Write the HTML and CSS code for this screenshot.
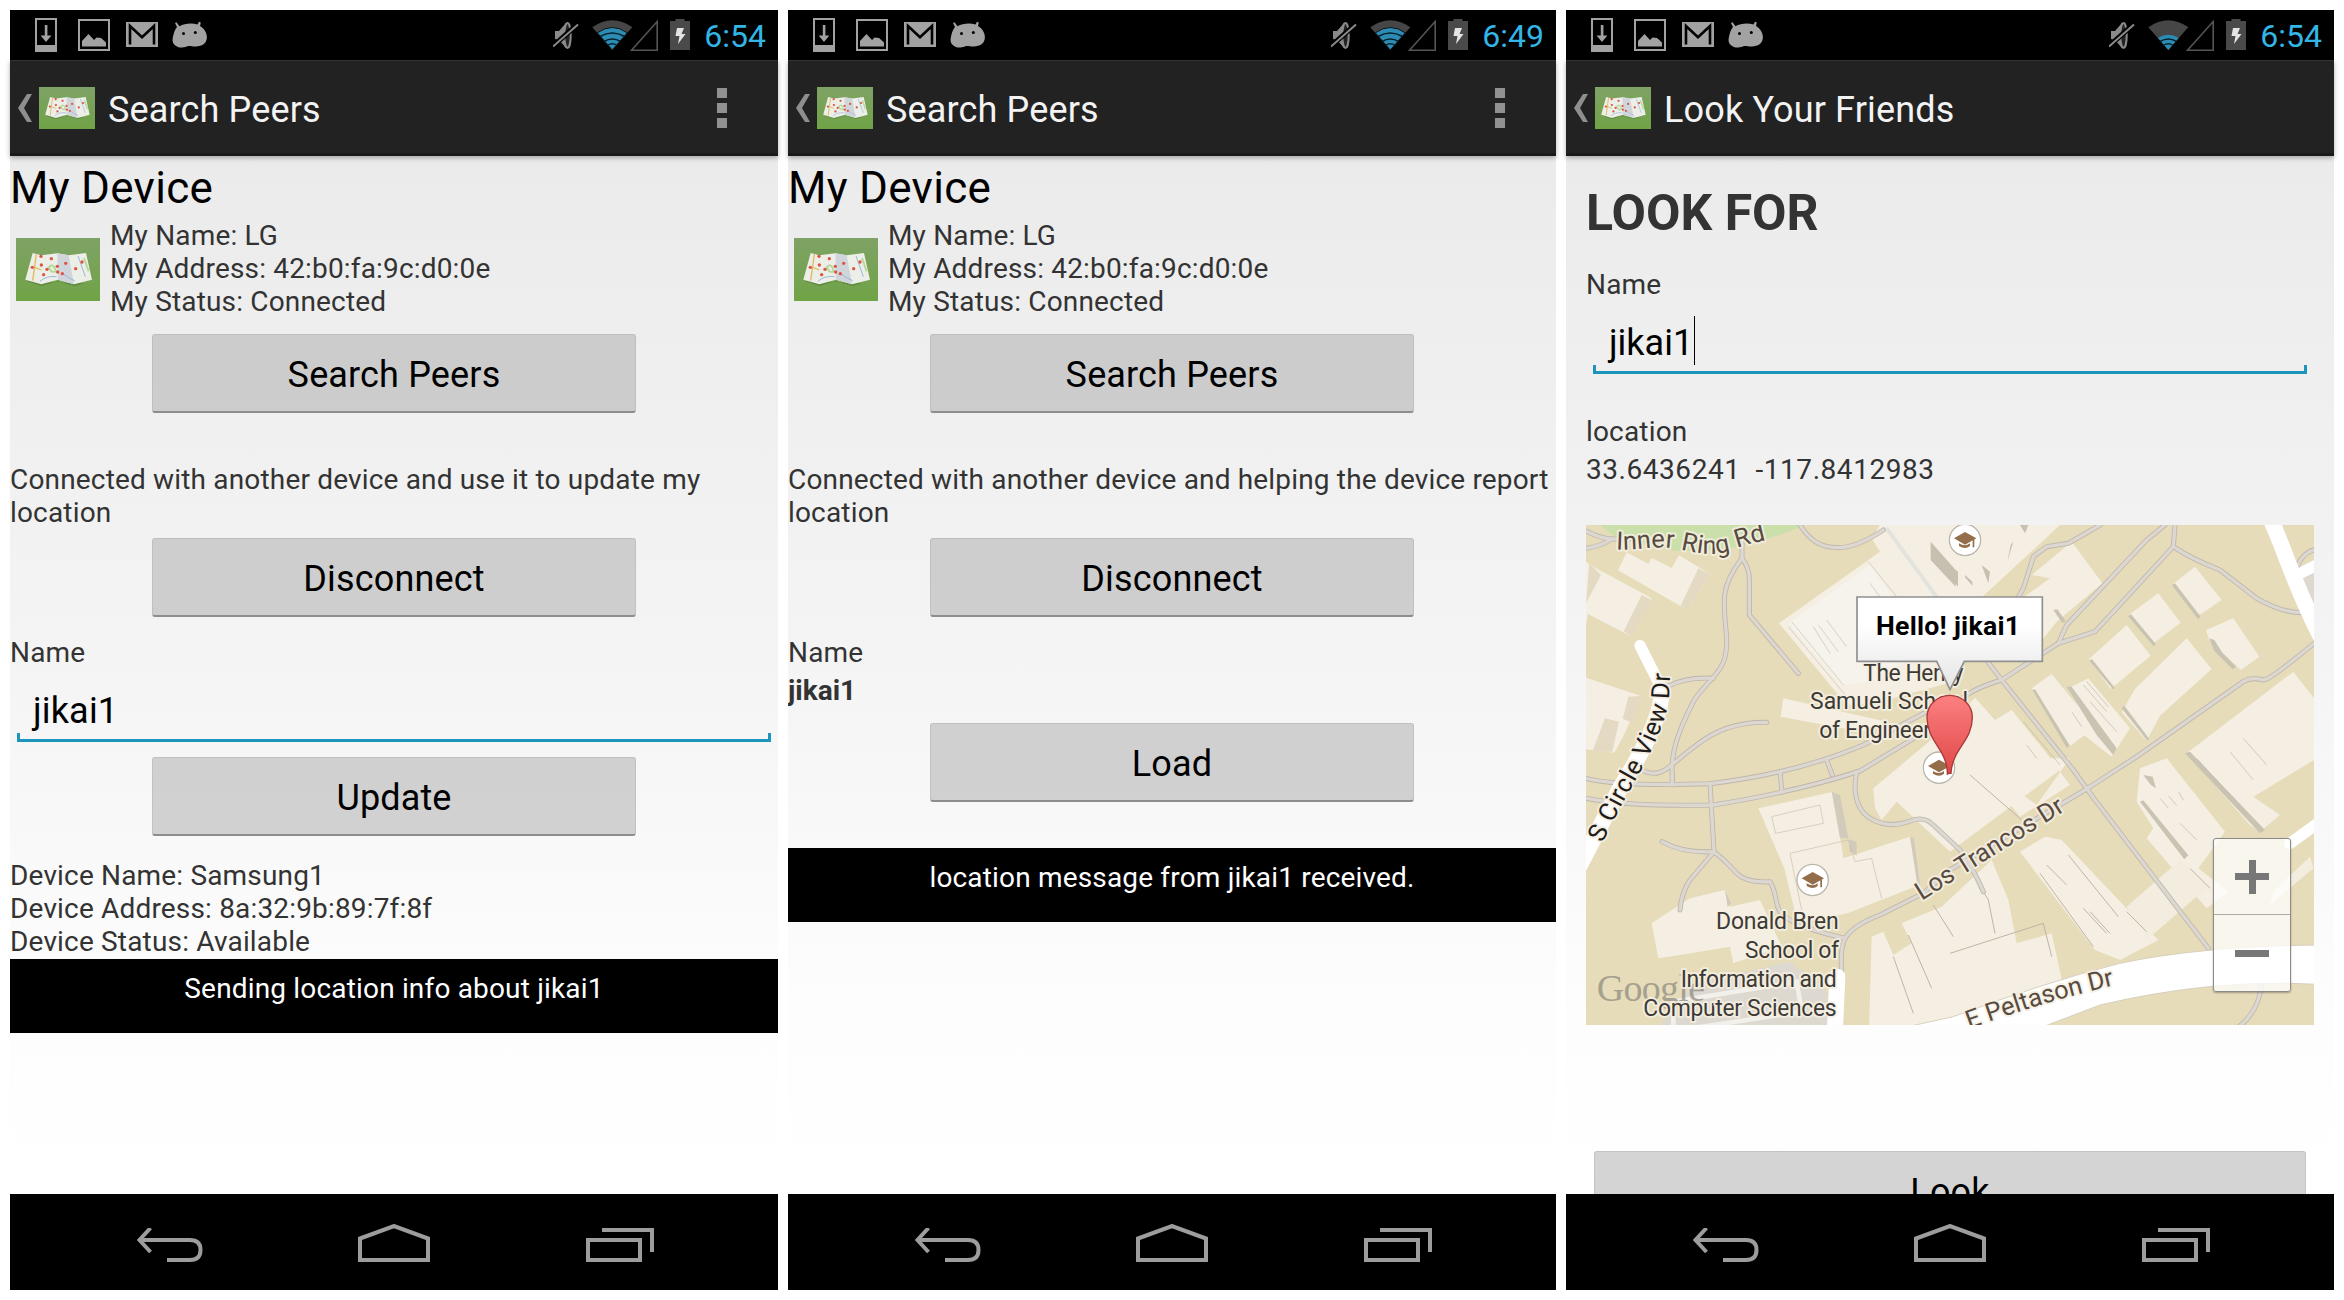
FILE: index.html
```html
<!DOCTYPE html>
<html lang="en">
<head>
<meta charset="utf-8">
<title>Search Peers</title>
<link rel="stylesheet" href="styles.css">
</head>
<body>
<svg class="sprite" aria-hidden="true">
  <defs>
    <linearGradient id="grass" x1="0" y1="0" x2="0" y2="1"><stop offset="0" stop-color="#7fa266"/><stop offset="1" stop-color="#70a346"/></linearGradient>
    <linearGradient id="pinfill" x1="0" y1="0" x2="0" y2="1"><stop offset="0" stop-color="#fc8080"/><stop offset="1" stop-color="#e04848"/></linearGradient>
    <linearGradient id="bubble" x1="0" y1="0" x2="0" y2="1"><stop offset="0.3" stop-color="#fff"/><stop offset="1" stop-color="#e4e4e4"/></linearGradient>
  </defs>
  <symbol id="i-download" viewBox="35 10 22 50"><path fill="#a2a2a2" fill-rule="evenodd" d="M35 18h22v34H35zM37 20v25h18V20z"/><path fill="#a2a2a2" d="M44.800 25h2.600v10.500h4L46 42l-5.400-6.500h4.200z"/></symbol>
  <symbol id="i-picture" viewBox="78 10 32 50"><path fill="none" stroke="#a2a2a2" stroke-width="2" d="M79 20h30v30H79z"/><path fill="#a2a2a2" d="M82 46.500V41l6.500-7 5.500 6 2.500-2.500 4.500.5 5 4.500v4z"/></symbol>
  <symbol id="i-mail" viewBox="126 10 32 50"><path fill="#a2a2a2" d="M126 22h32v25h-32z"/><path fill="none" stroke="#000" stroke-width="2.600" d="M130 44.500V26l12 11.200L154 26v18.500"/></symbol>
  <symbol id="i-droid" viewBox="172 10 36 50"><path fill="#a2a2a2" d="M177 27l-2-4 1.500-.8 3 4c5-2.800 12-3.500 18-1.700l1.500-2.800 1.800.8-.8 3.600c4 2.400 7 6.500 6.900 11.500-.2 6-5 8.800-11 9-4 .2-6-1-9-.2-4 1.200-6 1.600-9 .6-6-2.200-6-7-4.500-12 .6-3 1.800-5.600 3.600-8z"/><circle cx="183.500" cy="33.500" r="1.500"/><circle cx="195.300" cy="32.500" r="1.500"/></symbol>
  <symbol id="i-mute" viewBox="553 10 26 50"><path fill="#8a8a8a" d="M555 31h4l7-8v25l-7-8-4-1z"/><ellipse cx="567.500" cy="35.500" rx="3.200" ry="12.500" fill="#222" stroke="#8a8a8a" stroke-width="2"/><path stroke="#000" stroke-width="5" d="M553 46l25-22"/><path stroke="#8a8a8a" stroke-width="2" d="M553 46.500l25-22"/></symbol>
  <symbol id="i-wifi" viewBox="592 10 40 50"><path fill="#464646" d="M612.300 50l-20-22.800q20-14 40 0z"/><path stroke="#111" fill="#2c8cb4" stroke-width="1" d="M612.300 50l-15-17.200q15-10.600 30 0z"/><path fill="none" stroke="#04202c" stroke-width="1.500" d="M600 36.500q12.300-7 24.600 0M604 41.500q8.300-5 16.600 0M607.500 45.300q4.800-3 9.600 0"/></symbol>
  <symbol id="i-wifi-low" viewBox="592 10 40 50"><path fill="#464646" d="M612.300 50l-20-22.800q20-14 40 0z"/><path fill="#2c8cb4" d="M612.300 50l-10.300-12q10.300-6.500 20.600 0z"/><path fill="none" stroke="#04202c" stroke-width="1.500" d="M604 41.500q8.300-5 16.600 0M607.500 45.300q4.800-3 9.600 0"/></symbol>
  <symbol id="i-signal" viewBox="630 10 28 50"><path fill="none" stroke="#555" stroke-width="1.600" d="M631.500 50.200h25.700V21.500z"/></symbol>
  <symbol id="i-battery" viewBox="670 10 20 50"><path fill="#4a4a4a" d="M670 21h5.500v-2h9v2h5.500v29h-20z"/><path fill="#e4e4e4" d="M677 28h7l-2.500 6h4L678 44l1.500-8h-4z"/></symbol>
  <symbol id="i-app" viewBox="0 0 252 189">
    <path fill="url(#grass)" d="M0 0h252v189H0z"/>
    <path fill="#4c6f35" opacity=".5" d="M30 128l46 16 48-14 52 14 54-16-26 8z"/>
    <path fill="#eceee8" d="M50 45l26 7 48-6 34 6 52-7 18 80-54 14-48-14-50 14-48-14z"/>
    <path fill="#cfd5db" d="M124 46l34 6 16 87-48-14z"/>
    <path fill="none" stroke="#e0b95e" stroke-width="4" d="M61 49L50 128M56 88l20 8"/>
    <path fill="none" stroke="#9db7d8" stroke-width="3" d="M72 130q20-18 50-14M142 108q18 14 34 20M186 54l22 62"/>
    <path fill="none" stroke="#b5d99a" stroke-width="6" d="M98 88q10-14 18 2t-10 10zM204 60l14 40"/>
    <g fill="#dc5442"><circle cx="75" cy="55" r="5"/><circle cx="106" cy="62" r="5"/><circle cx="76" cy="81" r="5"/><circle cx="49" cy="88" r="5"/><circle cx="93" cy="94" r="5"/><circle cx="83" cy="110" r="5"/><circle cx="124" cy="85" r="5"/><circle cx="125" cy="102" r="5"/><circle cx="149" cy="76" r="5"/><circle cx="139" cy="107" r="5"/><circle cx="198" cy="72" r="5"/><circle cx="179" cy="92" r="5"/></g>
  </symbol>
  <symbol id="i-up" viewBox="0 0 14 28"><path fill="#8e8e8e" d="M9 0h5L6 14l8 14H9L0 14z"/></symbol>
  <symbol id="i-back" viewBox="0 0 68 34"><path fill="none" stroke="#9d9d9d" stroke-width="4" d="M13.500 0L2.500 12l11 12M3 12H53q10.500 0 10.500 10T53 32H30"/></symbol>
  <symbol id="i-home" viewBox="0 0 72 38"><path fill="none" stroke="#9d9d9d" stroke-width="4" d="M2 36V14.500L36 2l34 12.500V36z"/></symbol>
  <symbol id="i-recent" viewBox="0 0 68 34"><path fill="none" stroke="#9d9d9d" stroke-width="4" d="M2 12h52v20H2zM16 2h50v22"/></symbol>
  <symbol id="i-school" viewBox="-50 -50 100 100"><circle r="47" fill="#fff" stroke="#bbb5ab" stroke-width="4"/><path fill="#946d4a" d="M-33-5L0-24 34-5 0 14zM-18 10q18 12 33 0v8q-14 12-33 0zM23-2h5v24h-5z"/></symbol>
</svg>

<main class="board">
  <section class="phone">
    <div class="statusbar">
      <svg class="s-download"><use href="#i-download"/></svg><svg class="s-picture"><use href="#i-picture"/></svg><svg class="s-mail"><use href="#i-mail"/></svg><svg class="s-droid"><use href="#i-droid"/></svg>
      <div class="system"><svg class="s-mute"><use href="#i-mute"/></svg><svg class="s-wifi"><use href="#i-wifi"/></svg><svg class="s-signal"><use href="#i-signal"/></svg><svg class="s-battery"><use href="#i-battery"/></svg><span class="clock">6:54</span></div>
    </div>
    <header class="actionbar"><svg class="up"><use href="#i-up"/></svg><svg class="appicon"><use href="#i-app"/></svg><h1>Search Peers</h1><div class="overflow"><i></i><i></i><i></i></div></header>
    <div class="content">
      <h2>My Device</h2>
      <div class="device"><svg><use href="#i-app"/></svg><div><p>My Name: LG</p><p>My Address: 42:b0:fa:9c:d0:0e</p><p>My Status: Connected</p></div></div>
      <button class="btn">Search Peers</button>
      <p class="message">Connected with another device and use it to update my location</p>
      <button class="btn second">Disconnect</button>
      <p class="label">Name</p>
      <div class="field"><span>jikai1</span></div>
      <button class="btn update">Update</button>
      <div class="peer"><p>Device Name: Samsung1</p><p>Device Address: 8a:32:9b:89:7f:8f</p><p>Device Status: Available</p></div>
      <div class="toast">Sending location info about jikai1</div>
    </div>
    <nav class="navbar"><svg class="n-back"><use href="#i-back"/></svg><svg class="n-home"><use href="#i-home"/></svg><svg class="n-recent"><use href="#i-recent"/></svg></nav>
  </section>

  <section class="phone">
    <div class="statusbar">
      <svg class="s-download"><use href="#i-download"/></svg><svg class="s-picture"><use href="#i-picture"/></svg><svg class="s-mail"><use href="#i-mail"/></svg><svg class="s-droid"><use href="#i-droid"/></svg>
      <div class="system"><svg class="s-mute"><use href="#i-mute"/></svg><svg class="s-wifi"><use href="#i-wifi"/></svg><svg class="s-signal"><use href="#i-signal"/></svg><svg class="s-battery"><use href="#i-battery"/></svg><span class="clock">6:49</span></div>
    </div>
    <header class="actionbar"><svg class="up"><use href="#i-up"/></svg><svg class="appicon"><use href="#i-app"/></svg><h1>Search Peers</h1><div class="overflow"><i></i><i></i><i></i></div></header>
    <div class="content">
      <h2>My Device</h2>
      <div class="device"><svg><use href="#i-app"/></svg><div><p>My Name: LG</p><p>My Address: 42:b0:fa:9c:d0:0e</p><p>My Status: Connected</p></div></div>
      <button class="btn">Search Peers</button>
      <p class="message">Connected with another device and helping the device report location</p>
      <button class="btn second">Disconnect</button>
      <p class="label">Name</p>
      <p class="value">jikai1</p>
      <button class="btn load">Load</button>
      <div class="toast late">location message from jikai1 received.</div>
    </div>
    <nav class="navbar"><svg class="n-back"><use href="#i-back"/></svg><svg class="n-home"><use href="#i-home"/></svg><svg class="n-recent"><use href="#i-recent"/></svg></nav>
  </section>

  <section class="phone">
    <div class="statusbar">
      <svg class="s-download"><use href="#i-download"/></svg><svg class="s-picture"><use href="#i-picture"/></svg><svg class="s-mail"><use href="#i-mail"/></svg><svg class="s-droid"><use href="#i-droid"/></svg>
      <div class="system"><svg class="s-mute"><use href="#i-mute"/></svg><svg class="s-wifi"><use href="#i-wifi-low"/></svg><svg class="s-signal"><use href="#i-signal"/></svg><svg class="s-battery"><use href="#i-battery"/></svg><span class="clock">6:54</span></div>
    </div>
    <header class="actionbar"><svg class="up"><use href="#i-up"/></svg><svg class="appicon"><use href="#i-app"/></svg><h1>Look Your Friends</h1></header>
    <div class="content look">
      <h2 class="lookfor">LOOK FOR</h2>
      <p class="label">Name</p>
      <div class="field"><span class="typing">jikai1</span></div>
      <p class="loc">location</p>
      <p class="coords">33.6436241&nbsp; -117.8412983</p>
      <div class="map">
        <svg class="mapart" viewBox="18 30 2184 1500">
          <defs>
            <g id="paths">
              <path d="M18 48Q60 70 95 72H150M18 100Q60 95 95 72"/>
              <path d="M486 75V130Q440 190 434 240C428 320 450 370 434 430C420 480 360 520 340 560C310 620 270 700 277 780V810"/>
              <path d="M486 130Q510 160 508 200V300L655 475"/>
              <path d="M400 490Q320 485 260 515"/>
              <path d="M560 622C470 620 400 650 350 690C280 740 260 775 220 775Q190 775 150 740"/>
              <path d="M18 790Q120 815 390 806Q650 775 850 690L1040 590"/>
              <path d="M18 850Q150 875 400 870Q650 830 840 768L1010 665"/>
              <path d="M390 806L402 1010M600 770L606 832M740 735L757 780M277 780V808"/>
              <path d="M830 770C815 840 835 895 880 915Q930 940 985 920Q1030 900 1060 930L1140 1005Q1180 1060 1210 1130"/>
              <path d="M246 980Q310 1015 400 1010Q430 1030 470 1075Q500 1105 570 1100C595 1140 580 1180 615 1205Q660 1240 795 1270"/>
              <path d="M402 1010L330 1095Q305 1130 300 1185"/>
              <path d="M785 1370Q780 1300 795 1270Q820 1230 900 1200L1030 1135L1110 1065L1515 825L1670 725L1990 500Q2015 485 2050 495Q2070 495 2202 385"/>
              <path d="M660 30Q700 95 760 97Q820 105 910 45"/>
              <path d="M1560 30Q1500 65 1465 85L1400 95L1360 125Q1340 190 1330 220L1290 290"/>
              <path d="M1755 30L1700 75L1460 330L1435 385L1265 495Q1180 520 1140 555L1100 610"/>
              <path d="M1785 30L1780 95L1545 350L1435 385"/>
              <path d="M1780 95Q1830 130 1920 165L2030 250Q2110 295 2170 293"/>
              <path d="M1215 430L1265 495L1480 765L1545 855L1885 1300"/>
              <path d="M2150 160Q2165 115 2202 105"/>
              <path d="M2045 1400Q2040 1490 1970 1540"/>
            </g>
          </defs>
          <rect x="18" y="30" width="2184" height="1500" fill="#e6dcba"/>
          <path fill="#cbdfaa" d="M60 30h615Q600 65 480 92Q400 112 290 108Q180 90 105 65z"/>
          <path fill="#f5efe3" d="M900 30h540L1040 400 1120 500 900 560 800 570 597 325 900 110 875 70zM140 112l65 35 10-18 60 30 22-38 92 55-65 110-210-120zM18 140l55 35-50 120-5 40zM68 170l147 80-65 112-132-68zM18 488l165 55-50 115-30 55-85-10z"/>
          <path fill="#e4dac4" d="M28 145l35 35-45 85zM355 160l34 16-65 110-22-14zM185 240l30 15-62 108-22-14zM145 545l38-2-25 80-30-12zM75 610l42 10-20 90-60 0z"/>
          <path fill="#f5f3eb" d="M625 325L870 150 960 275 1010 420 870 500 785 510z"/>
          <path fill="none" stroke="#e3e3de" stroke-width="12" d="M920 40L1080 260"/>
          <path fill="#f5efe3" d="M610 550l310 70-75 30-243-45zM880 820L1095 640 1185 548 1245 615 1295 585 1440 765 1110 1010 950 860 905 915 885 880zM535 880l225-50 30 200 200-65 28 145-215 85-150 30-40-165zM330 1150l105-25 15 50 90-20 65 140-145 50-10-50-150 25-65 10-20-105z"/>
          <path fill="#d2cbbb" d="M755 830l25 10 25 130-25 0zM808 972l22 10 0 40-22-15zM990 965l12 5 18 140-8 0zM435 1125l18 40-10 12z"/>
          <path fill="none" stroke="#c5bfaf" stroke-width="2" d="M630 1015l175-40 20 65 50-10 30 120M630 1015l35 170M575 905l12 50 143-30-10-55zM865 140l85 105M635 320l155 190M700 335l50 80M715 330l60 80M740 315l60 80M870 205l40 55M625 335l175 210"/>
          <path fill="#f5efe3" d="M1475 80L1567 205 1430 320 1350 420 1270 290 1410 190 1355 180zM1845 155l80 100-75 50-75-95zM1735 235l67 88-85 65-75-85zM1640 330l72 92-120 100-65-90zM1820 370l75 92-155 140-40 75-75-85 40-70zM1960 310l78 115-55 40-95-90-10-30zM1355 520l60-43 130 160-80 60zM1465 520l60-30 125 150-55 85-90-70 20-25zM1820 715L2140 470 2202 550 2202 735 2020 845 2100 900 2040 950 2010 930zM1680 760l80-30 175 220-80 110 90 70-65 50-180-210 20-30-50-80zM1110 815l90-60 120 150 150-95-60-80 60 0-100 140-70-50z"/>
          <path fill="#c9c3b2" d="M1775 210l10-5 77 100-8 7zM1643 303l10-5 75 90-7 6zM1528 437l8-5 68 86-5 5zM1625 580l8-8 75 100-6 5zM1888 370l15 5 25 40 40 40-10 8-55-55zM1357 525l8-2 105 170-10 5zM1460 515l15 0 135 185-10 20-50-60zM1815 715l15-5 225 235-15 10zM1680 860l10-4 135 165-12 12zM1690 780l28 5 10 35-15-10zM1420 285l12-2 25 35-10 6z"/>
          <path fill="none" stroke="#bfb8a8" stroke-width="2" d="M1510 510l70 80M1520 500l65 75M1530 560l80 90M1475 590l30 45M1990 670l70 80M1950 710l70 85M1850 730l100 110M1340 690l30 40M1330 620l110 130M1340 590l95 120M1800 925l50 50M1740 850l25 30M1765 842l25 30M1795 830l15 25"/>
          <path fill="#f5efe3" d="M1320 1010l75-45 50 10 190 200 100 100-115 60-75-30zM875 1265l35-15 30 70 55-35-30-60 120-50 150-140 50 120 25 130 105-30 35 160-80 55-420 130-85 10z"/>
          <path fill="#f3eddf" d="M1640 1175L1800 1035 1890 1110 1700 1275zM2080 1130l110-105 10 35-130 110z"/>
          <path fill="none" stroke="#bdb6a6" stroke-width="3" d="M1380 1075L1540 1295M1465 1020L1615 1205M1510 1180l70 75M1530 1190l60 65M1110 1315l280-90 25 100M1400 1050l60 60M1180 1080l45 75 20 100M1170 780l155 135M1640 1190l60 60M1830 1060l60 60M940 1325l60 170M985 1260l70 160M1060 1170l60 95"/>
          <path fill="#ddd8d0" d="M330 1410l300-70 110 90 10 100H240zM2202 155l-50 50 50 100z"/>
          <path fill="none" stroke="#f2f0ea" stroke-width="14" d="M280 1530v-70l370-60 15 90-330 50"/>
          <use href="#paths" class="casing"/>
          <use href="#paths" class="lane"/>
          <path d="M180 392L250 530" class="road narrow"/>
          <path d="M245 530Q245 620 120 820L0 1050" class="road"/>
          <path d="M2075 20C2120 120 2150 230 2230 380" class="road"/>
          <path d="M2150 180l60-30M2130 985l90-65" class="road narrow"/>
          <path d="M772 1385L765 1540" class="road"/>
          <path fill="#fff" stroke="#d8d0bd" stroke-width="3" d="M960 1540L1120 1505Q1400 1400 1620 1345Q1850 1295 2210 1290V1408Q1900 1390 1560 1470L1390 1535z"/>
          <g class="maplabel">
            <text class="halo street"><textPath href="#ring" textLength="458">Inner Ring Rd</textPath></text>
            <text class="halo street dark"><textPath href="#circle" textLength="555">S Circle View Dr</textPath></text>
            <text class="halo street"><textPath href="#trancos" textLength="510">Los Trancos Dr</textPath></text>
            <text class="halo street"><textPath href="#peltason" textLength="455">E Peltason Dr</textPath></text>
            <text class="halo" x="850" y="497" textLength="300">The Henry</text>
            <text class="halo" x="690" y="582" textLength="474">Samueli School</text>
            <text class="halo" x="718" y="668" textLength="425">of Engineering</text>
            <text class="google" x="50" y="1458" textLength="325">Google</text>
            <text class="halo" x="408" y="1243" textLength="368">Donald Bren</text>
            <text class="halo" x="495" y="1329" textLength="282">School of</text>
            <text class="halo" x="302" y="1415" textLength="468">Information and</text>
            <text class="halo" x="190" y="1502" textLength="580">Computer Sciences</text>
          </g>
          <defs>
            <path id="ring" d="M108 103C180 108 230 88 300 103C360 116 400 124 455 106C490 90 530 82 600 65"/>
            <path id="circle" d="M68 985C130 850 180 780 210 715C240 650 262 600 267 545L272 440"/>
            <path id="trancos" d="M1025 1157L1260 1010L1480 872"/>
            <path id="peltason" d="M1168 1542Q1400 1455 1640 1403"/>
          </defs>
          <path fill="#c7c0b0" d="M1052 80l75 85v50l-75-80zM1110 150l24 20v45l-22-30zM1205 150l25 20-5 35zM1155 180l22 20v12l-22-25zM1300 80l-18 60 10-50zM1320 30l25 0-10 25z"/>
          <use href="#i-school" x="1105" y="25" width="100" height="100"/>
          <use href="#i-school" x="1027" y="708" width="100" height="100"/>
          <use href="#i-school" x="648" y="1045" width="100" height="100"/>
          <path fill="url(#pinfill)" stroke="#a83a3a" stroke-width="4" d="M1103 775C1099 700 1041 680 1041 607a68 66 0 0 1 136 0C1177 680 1117 700 1113 775z"/>
          <path fill="url(#bubble)" stroke="#909090" stroke-width="5" d="M831 246h556v193h-234l-43 85-40-85H831z"/>
          <text class="hello" x="888" y="360" textLength="432">Hello! jikai1</text>
        </svg>
        <div class="zoom"><span class="plus"></span><span class="minus"></span></div>
      </div>
      <button class="btn wide">Look</button>
    </div>
    <nav class="navbar"><svg class="n-back"><use href="#i-back"/></svg><svg class="n-home"><use href="#i-home"/></svg><svg class="n-recent"><use href="#i-recent"/></svg></nav>
  </section>
</main>
</body>
</html>
```
FILE: styles.css
```css
* { box-sizing: border-box; }
body { margin: 0; background: #fff; font-family: Roboto, sans-serif; color: #333; }
h1, h2, p { margin: 0; font-weight: 400; }
svg { display: block; flex: none; }
.sprite { position: absolute; width: 0; height: 0; }
.board { display: flex; gap: 10px; padding: 10px; width: 2344px; height: 1300px; }
.phone { width: 768px; height: 1280px; display: flex; flex-direction: column; flex: none; }

.statusbar { height: 50px; flex: none; background: #000; display: flex; padding: 0 12px 0 25px; }
.statusbar svg { height: 50px; }
.s-download { width: 22px; margin-right: 21px; }
.s-picture { width: 32px; margin-right: 16px; }
.s-mail { width: 32px; margin-right: 14px; }
.s-droid { width: 36px; }
.system { display: flex; margin-left: auto; }
.s-mute { width: 26px; margin-right: 13px; }
.s-wifi { width: 40px; margin-right: -2px; }
.s-signal { width: 28px; margin-right: 12px; }
.s-battery { width: 20px; margin-right: 12px; }
.clock { width: 64px; font-size: 32px; line-height: 52px; color: #33b5e5; text-align: right; white-space: nowrap; }

.actionbar { height: 96px; flex: none; display: flex; align-items: center; padding-left: 8px; background: #222; border-top: 1px solid #333; border-bottom: 3px solid #1a1a1a; box-shadow: 0 2px 5px rgba(0,0,0,.3); position: relative; }
.up { width: 14px; height: 28px; margin-right: 7px; }
.appicon { width: 56px; height: 42px; margin-right: 13px; }
.up, .appicon, .overflow { margin-top: 2px; }
.actionbar h1 { font-size: 36px; line-height: 42px; letter-spacing: .15px; color: #f3f3f3; white-space: nowrap; padding-top: 5px; }
.overflow { margin-left: auto; margin-right: 51px; display: grid; gap: 5px; }
.overflow i { width: 10px; height: 10px; background: #919191; }

.content { flex: 1; min-height: 0; overflow: hidden; background: linear-gradient(#ebebeb, #f5f5f5 52%, #fdfdfd 82%, #fff); font-size: 28px; line-height: 33px; letter-spacing: .17px; padding-top: 6px; }
.content h2 { font-size: 44px; line-height: 52px; letter-spacing: .3px; color: #000; }
.device { display: flex; align-items: center; gap: 10px; padding-left: 6px; margin-top: 5px; }
.device svg { width: 84px; height: 63px; margin-top: 2px; }
.btn { display: block; width: 484px; height: 79px; margin: 16px auto 0; padding: 3px 0 0; font: 400 36px/42px Roboto, sans-serif; letter-spacing: .15px; color: #000; background: rgba(170,170,170,.5); border: 1px solid rgba(150,150,150,.25); border-bottom: 2px solid #8d8d8d; border-radius: 3px; }
.message { margin-top: 50px; }
.second { margin-top: 9px; }
.label { margin-top: 19px; }
.field { height: 73px; margin: 0 7px; padding: 21px 16px 0; font-size: 36px; line-height: 42px; color: #000; background: linear-gradient(#1c95bd, #1c95bd) bottom / 100% 3px no-repeat, linear-gradient(#1c95bd, #1c95bd) left bottom / 3px 9px no-repeat, linear-gradient(#1c95bd, #1c95bd) right bottom / 3px 9px no-repeat; }
.update { margin-top: 15px; }
.peer { margin-top: 23px; }
.toast { height: 74px; margin-top: 1px; padding-top: 13px; background: #000; color: #fff; text-align: center; }
.value { margin-top: 5px; font-weight: 700; letter-spacing: 0; }
.load { margin-top: 16px; }
.late { margin-top: 46px; }

.look { padding: 28px 20px 0; }
.content .lookfor { font-size: 50px; line-height: 58px; font-weight: 700; color: #333; letter-spacing: 0; }
.look .label { margin-top: 26px; }
.typing { display: inline-block; height: 49px; margin-top: -6px; padding-top: 6px; border-right: 1px solid #000; letter-spacing: 0; padding-right: 1px; }
.loc { margin-top: 41px; }
.coords { margin-top: 5px; letter-spacing: .55px; }
.map { position: relative; width: 728px; height: 500px; margin-top: 39px; overflow: hidden; letter-spacing: 0; }
.mapart { width: 728px; height: 500px; }
.casing, .lane { fill: none; stroke-linecap: round; stroke-linejoin: round; }
.casing { stroke: #bdb6ac; stroke-width: 15px; }
.lane { stroke: #ddd7d1; stroke-width: 10px; }
.road { fill: none; stroke: #fff; stroke-linecap: round; stroke-width: 48px; }
.narrow { stroke-width: 34px; }
.maplabel { font-size: 69px; fill: #3d3a36; }
.halo { paint-order: stroke; stroke: rgba(245,239,226,.85); stroke-width: 12px; stroke-linejoin: round; }
.street { fill: #584a40; font-size: 76px; }
.dark { fill: #1f1c1a; }
.google { font-family: "Liberation Serif", serif; font-size: 114px; fill: #8c877c; opacity: .7; }
.hello { font-size: 80px; font-weight: 700; fill: #000; }
.zoom { position: absolute; right: 23px; bottom: 33px; width: 78px; height: 154px; display: grid; grid-template-rows: 1fr 1fr; border: 1px solid #8b8b88; border-radius: 3px; background: rgba(255,255,255,.75); box-shadow: 0 1px 2px rgba(0,0,0,.3); }
.zoom span { display: block; background: linear-gradient(#777, #777) center / 34px 7px no-repeat; }
.zoom .plus { border-bottom: 1px solid #aaa; background: linear-gradient(#777, #777) center / 34px 7px no-repeat, linear-gradient(#777, #777) center / 7px 34px no-repeat; }
.wide { width: 712px; margin-top: 126px; padding-top: 4px; }

.navbar { height: 96px; flex: none; background: #000; display: flex; padding: 34px 0 0 127px; }
.n-back { width: 68px; height: 34px; margin-right: 153px; }
.n-home { width: 72px; height: 38px; margin-right: 156px; margin-top: -4px; }
.n-recent { width: 68px; height: 34px; }
```
